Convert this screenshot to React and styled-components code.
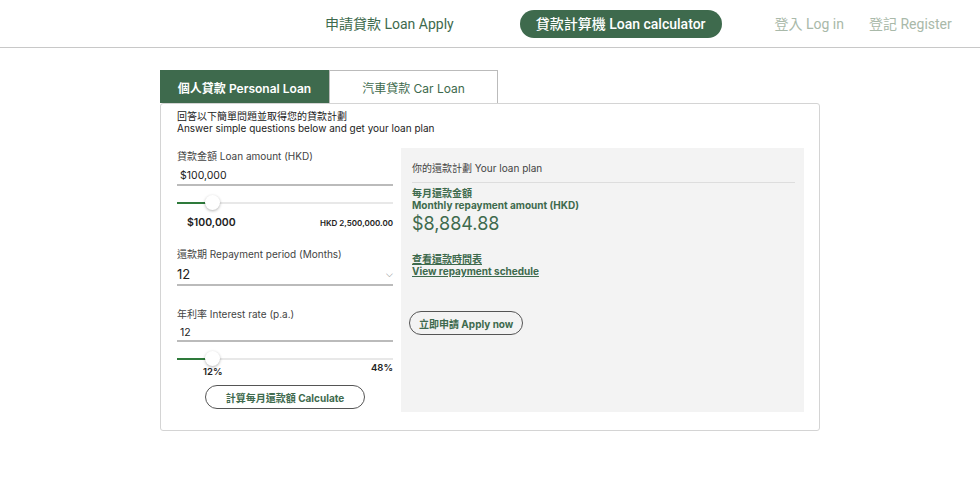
import React from "react";
import styled, { createGlobalStyle } from "styled-components";

const G = "#3e6a4d";
const Global = createGlobalStyle`
  body { margin: 0; background: #fff; font-family: Inter, "Noto Sans CJK TC", sans-serif; color: #222; }
  * { box-sizing: border-box; }
`;
const Header = styled.header`
  height: 48px; border-bottom: 1px solid #c8c8c8; display: flex; align-items: center;
  padding-left: 325px; font-family: Roboto, "Noto Sans CJK TC", sans-serif; font-size: 14px; white-space: nowrap;
`;
const NavItem = styled.div`
  color: ${p => p.$muted ? "#a9b9a9" : p.$active ? "#fff" : G};
  background: ${p => p.$active ? G : "transparent"};
  border-radius: 14px; height: 28px; line-height: 28px; flex-shrink: 0;
  padding: 0 ${p => p.$active ? 16 : 0}px; margin-right: ${p => p.$mr}px;
  font-weight: ${p => p.$active ? 500 : 400};
`;
const Main = styled.div`padding: 22px 0 0 160px; width: 820px;`;
const Tabs = styled.div`display: flex;`;
const Tab = styled.div`
  width: 169px; height: 33px; display: flex; align-items: center; justify-content: center;
  font-size: 12px; background: ${p => p.$on ? G : "#fff"}; color: ${p => p.$on ? "#fff" : G};
  border: 1px solid ${p => p.$on ? G : "#bbb"}; border-bottom: none; font-weight: ${p => p.$on ? 600 : 400};
`;
const Card = styled.div`
  width: 660px; border: 1px solid #d4d4d4; border-radius: 3px; padding: 6px 15px 18px 16px;
`;
const Intro = styled.div`font-size: 10px; line-height: 12px; color: #222; margin-bottom: 14px;`;
const Row = styled.div`display: flex; gap: 8px; align-items: flex-start;`;
const Left = styled.div`width: 216px; display: flex; flex-direction: column;`;
const Label = styled.div`font-size: 10px; color: #444; margin-bottom: 5px;`;
const Value = styled.div`
  font-size: ${p => p.$big ? 13 : 10.5}px; padding: 0 ${p => p.$pad}px 2px; border-bottom: 2px solid #bbb;
  display: flex; justify-content: space-between; align-items: center; height: ${p => p.$h}px;
`;
const Track = styled.div`
  position: relative; height: 2px; background: #e8e8e8; margin: 16px 0 0;
`;
const Fill = styled.div`position: absolute; left: 0; top: 0; height: 2px; background: #2e7a3b;`;
const Knob = styled.div`
  position: absolute; top: -7px; width: 15px; height: 15px; border-radius: 50%;
  background: #fff; box-shadow: 0 1px 3px rgba(0,0,0,.3);
`;
const Ends = styled.div`
  display: flex; justify-content: space-between; font-weight: 600; color: #222;
  font-size: ${p => p.$fs}px; padding-left: ${p => p.$pl}px; margin-top: ${p => p.$mt}px;
`;
const Small = styled.span`font-size: ${p => p.$fs}px; align-self: ${p => p.$a || "auto"};`;
const Btn = styled.div`
  align-self: ${p => p.$a || "center"}; border: 1px solid #555; border-radius: 12px; height: 24px;
  padding: 0 ${p => p.$px}px; display: flex; align-items: center; font-size: 10px; font-weight: 700; color: ${G};
`;
const Panel = styled.div`
  flex: 1; background: #f3f3f3; height: 264px; margin-top: 0; padding: 12px 9px 0 11px;
  display: flex; flex-direction: column;
`;
const PTitle = styled.div`font-size: 10px; color: #444; padding-bottom: 7px; border-bottom: 1px solid #ddd;`;
const Green = styled.div`color: ${G}; font-size: 10px; font-weight: 700; line-height: 12px;`;
const Amount = styled.div`color: ${G}; font-size: 18px; margin-top: 2px;`;
const Link = styled.div`
  color: ${G}; font-size: 10px; font-weight: 700; line-height: 12px; margin-top: 19px;
  span { text-decoration: underline; display: inline-block; }
`;

const Slider = ({ pct }) => (
  <Track><Fill style={{ width: pct + "%" }} /><Knob style={{ left: `calc(${pct}% - 7px)` }} /></Track>
);

export default function App() {
  return (
    <>
      <Global />
      <Header>
        <NavItem $mr={66}>申請貸款 Loan Apply</NavItem>
        <NavItem $active $mr={53}>貸款計算機 Loan calculator</NavItem>
        <NavItem $muted $mr={25}>登入 Log in</NavItem>
        <NavItem $muted $mr={0}>登記 Register</NavItem>
      </Header>
      <Main>
        <Tabs><Tab $on>個人貸款 Personal Loan</Tab><Tab>汽車貸款 Car Loan</Tab></Tabs>
        <Card>
          <Intro>回答以下簡單問題並取得您的貸款計劃<br />Answer simple questions below and get your loan plan</Intro>
          <Row>
            <Left>
              <Label>貸款金額 Loan amount (HKD)</Label>
              <Value $pad={3} $h={18}>$100,000</Value>
              <Slider pct={16} />
              <Ends $fs={10.5} $pl={10} $mt={12}>
                <span>$100,000</span><Small $fs={8} $a="center">HKD 2,500,000.00</Small>
              </Ends>
              <Label style={{ marginTop: 17 }}>還款期 Repayment period (Months)</Label>
              <Value $big $pad={0} $h={20}>12<Small $fs={9} style={{ color: "#777" }}>⌵</Small></Value>
              <Label style={{ marginTop: 20 }}>年利率 Interest rate (p.a.)</Label>
              <Value $pad={3} $h={16}>12</Value>
              <Slider pct={16} />
              <Ends $fs={9.5} $pl={26} $mt={2}>
                <span style={{ marginTop: 4 }}>12%</span><span>48%</span>
              </Ends>
              <Btn $px={20} style={{ marginTop: 8 }}>計算每月還款額 Calculate</Btn>
            </Left>
            <Panel>
              <PTitle>你的還款計劃 Your loan plan</PTitle>
              <Green style={{ marginTop: 4 }}>每月還款金額<br />Monthly repayment amount (HKD)</Green>
              <Amount>$8,884.88</Amount>
              <Link><span>查看還款時間表<br />View repayment schedule</span></Link>
              <Btn $a="flex-start" $px={9} style={{ marginTop: 34, marginLeft: -3 }}>立即申請 Apply now</Btn>
            </Panel>
          </Row>
        </Card>
      </Main>
    </>
  );
}
